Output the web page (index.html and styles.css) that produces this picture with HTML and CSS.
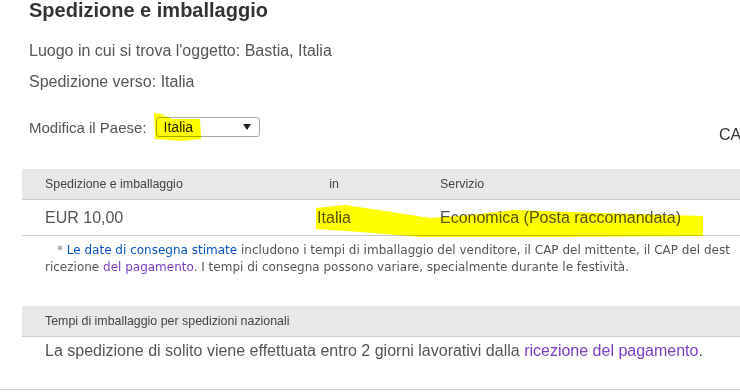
FILE: index.html
```html
<!DOCTYPE html>
<html lang="it">
<head>
  <meta charset="UTF-8">
  <title>Spedizione e imballaggio</title>
  <meta name="viewport" content="width=device-width, initial-scale=1.0">
  <link rel="stylesheet" href="styles.css">
</head>
<body>

  <h1 class="title">Spedizione e imballaggio</h1>

  <p class="info">Luogo in cui si trova l'oggetto: Bastia, Italia</p>
  <p class="info">Spedizione verso: Italia</p>

  <div class="country-row">
    <span class="country-label">Modifica il Paese:</span>
    <div class="fake-select">
      <span>Italia</span>
      <svg class="arrow" width="8" height="6" viewBox="0 0 8 6"><polygon points="0,0 8,0 4,6" fill="#222"/></svg>
    </div>
    <span class="cut-text">CA</span>
  </div>

  <div class="ship-table">
    <div class="ship-head">
      <div class="col-cost">Spedizione e imballaggio</div>
      <div class="col-to">in</div>
      <div class="col-service">Servizio</div>
    </div>
    <div class="ship-row">
      <div class="col-cost">EUR 10,00</div>
      <div class="col-to">Italia</div>
      <div class="col-service">Economica (Posta raccomandata)</div>
    </div>
  </div>

  <p class="note"><span class="star">*</span> <a class="link" href="#">Le date di consegna stimate</a> includono i tempi di imballaggio del venditore, il CAP del mittente, il CAP del dest<br>ricezione <a class="link visited" href="#">del pagamento</a>. I tempi di consegna possono variare, specialmente durante le festività.</p>

  <div class="pack">
    <div class="pack-head">Tempi di imballaggio per spedizioni nazionali</div>
    <div class="pack-body">La spedizione di solito viene effettuata entro 2 giorni lavorativi dalla <a class="link visited" href="#">ricezione del pagamento</a>.</div>
  </div>

  <!-- highlighter marks drawn over the screenshot -->
  <svg class="marker" width="740" height="392" viewBox="0 0 740 392">
    <polygon points="154,113 161,114 172,119 200,119 201,139 182,141 155,139" fill="#ffff00"/>
    <polygon points="316,208 345,205 385,211 430,218 470,215 515,210 600,213 703,216 703,236 560,237 420,237 360,232 316,229" fill="#ffff00"/>
  </svg>

</body>
</html>
```

FILE: styles.css
```css
body {
  font-family: "Liberation Sans", Arial, sans-serif;
  color: #555;
  background: #fff;
  margin: 0;
  width: 740px;
  height: 392px;
  overflow: hidden;
  position: relative;
}

.title {
  margin: 0;
  padding-left: 29px;
  font-size: 20px;
  line-height: 20px;
  font-weight: bold;
  color: #333;
}

.info {
  margin: 21px 0 0;
  padding-left: 29px;
  font-size: 16px;
  line-height: 20px;
}

.info + .info {
  margin-top: 11px;
}

.country-row {
  display: flex;
  align-items: center;
  height: 20px;
  margin-top: 25px;
  padding-left: 29px;
}

.country-label {
  font-size: 15px;
  margin-right: 9px;
}

.fake-select {
  display: flex;
  align-items: center;
  justify-content: space-between;
  box-sizing: border-box;
  width: 104px;
  height: 20px;
  padding: 0 8px 0 7px;
  border: 1px solid #a9a9a9;
  border-radius: 3px;
  font-size: 14px;
  color: #222;
}

.cut-text {
  margin-left: auto;
  align-self: flex-start;
  margin-top: 8px;
  width: 21px;
  white-space: nowrap;
  font-size: 16px;
  line-height: 20px;
  color: #333;
}

.ship-table {
  margin: 32px 0 0 22px;
}

.ship-head,
.ship-row {
  display: grid;
  grid-template-columns: 254px 116px 1fr;
  align-items: center;
  border-bottom: 1px solid #ccc;
}

.ship-head {
  height: 30px;
  background: #e8e8e8;
  font-size: 12.4px;
  color: #444;
}

.ship-row {
  height: 35px;
  font-size: 16px;
}

.col-cost {
  padding-left: 23px;
}

.col-to {
  text-align: center;
}

.col-service {
  padding-left: 48px;
}

.note {
  margin: 6px 0 0;
  padding-left: 45px;
  text-indent: 12px;
  font-family: "DejaVu Sans", Verdana, sans-serif;
  font-size: 12px;
  line-height: 17px;
  white-space: nowrap;
}

.star {
  color: #888;
}

.link {
  color: #0654ba;
  text-decoration: none;
}

.link.visited {
  color: #7b3fc4;
}

.pack {
  margin-top: 30px;
}

.pack-head {
  margin-left: 22px;
  height: 30px;
  line-height: 30px;
  padding-left: 23px;
  background: #e8e8e8;
  border-bottom: 1px solid #ccc;
  font-size: 12.4px;
  color: #444;
}

.pack-body {
  padding: 4px 0 28px 45px;
  font-size: 16px;
  line-height: 20px;
  border-bottom: 1px solid #ccc;
}

.marker {
  position: absolute;
  top: 0;
  left: 0;
  pointer-events: none;
  mix-blend-mode: multiply;
}
```
